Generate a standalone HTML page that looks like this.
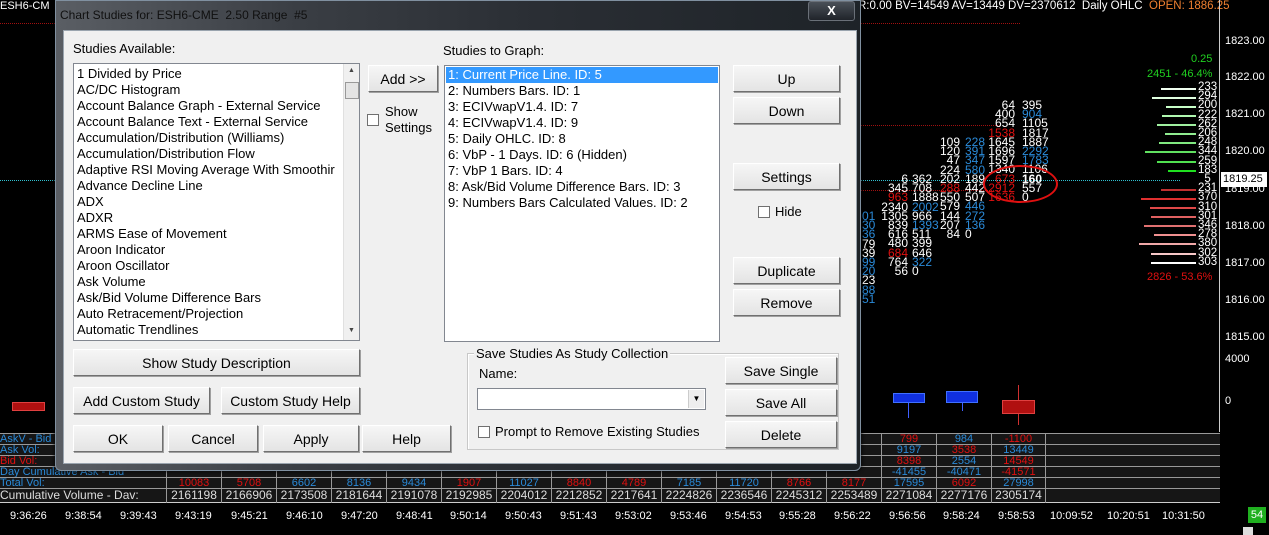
<!DOCTYPE html>
<html><head><meta charset="utf-8"><style>
*{margin:0;padding:0;box-sizing:border-box}
body{width:1269px;height:535px;background:#000;position:relative;overflow:hidden;font-family:"Liberation Sans",sans-serif;}
.a{position:absolute;white-space:nowrap}
.c{font-size:12px;line-height:9.2px;color:#fff}
.w{color:#ddd}.b{color:#2a8ad8}.r{color:#e01010}
.ax{font-size:11px;color:#fff;left:1225px}
.btn{position:absolute;background:linear-gradient(#f6f6f6,#e4e4e4);border:1px solid #fff;border-right-color:#707070;border-bottom-color:#707070;box-shadow:1px 1px 0 #a0a0a0;font-size:14px;color:#000;display:flex;align-items:center;justify-content:center}
.chk{position:absolute;width:12px;height:12px;border:1px solid #707070;background:#fff}
.dl{font-size:13px;color:#000}
.li{font-size:13px;line-height:16px;color:#000;padding-left:3px}
.hl{position:absolute;height:2px}
.row{position:absolute;left:0;width:1220px;height:11px;border-top:1px solid #999;font-size:11px;line-height:10px;background:#161616}
.row .lb{position:absolute;left:0;top:0}
.cells{position:absolute;left:166px;top:0;display:flex}
.cells i{font-style:normal;width:55px;text-align:center;border-left:1px solid #999;height:11px}
.cells i:last-child{border-right:1px solid #999}
</style></head><body>

<div class="a" style="left:0;top:0;font-size:11px;color:#fff">ESH6-CM</div>
<div class="a" style="left:858px;top:0;font-size:11.5px;color:#fff">R:0.00 BV=14549 AV=13449 DV=2370612 &nbsp;Daily OHLC <span style="color:#f08030">&nbsp;OPEN: 1886.25</span></div>

<div class="a" style="left:0;top:23px;width:55px;border-top:1px dotted #a01010"></div>
<div class="a" style="left:860px;top:23px;width:160px;border-top:1px dotted #a01010"></div>
<div class="a" style="left:860px;top:125px;width:140px;border-top:1px dotted #a01010"></div>
<div class="a" style="left:860px;top:190px;width:140px;border-top:1px dotted #a01010"></div>
<div class="a" style="left:860px;top:180px;width:320px;border-top:1px dotted #30c0d0"></div>
<div class="a" style="left:0;top:180px;width:55px;border-top:1px dotted #30c0d0"></div>

<div class="a" style="left:1219px;top:0;width:1px;height:432px;background:#ccc"></div>
<div class="a ax" style="top:35px">1823.00</div>
<div class="a ax" style="top:71px">1822.00</div>
<div class="a ax" style="top:108px">1821.00</div>
<div class="a ax" style="top:145px">1820.00</div>
<div class="a ax" style="top:183px">1819.00</div>
<div class="a" style="left:1221px;top:172px;width:46px;height:15px;background:#fff;color:#000;font-size:11px;padding-left:2px;line-height:15px">1819.25</div>
<div class="a ax" style="top:220px">1818.00</div>
<div class="a ax" style="top:257px">1817.00</div>
<div class="a ax" style="top:294px">1816.00</div>
<div class="a ax" style="top:331px">1815.00</div>
<div class="a ax" style="top:353px">4000</div>
<div class="a ax" style="top:395px">0</div>

<div class="a c" style="right:254px;top:101px;text-align:right">64<br>400<br>654<br><span class="r">1538</span><br>1645<br>1696<br>1597<br>1340<br><span class="r">673</span><br><span class="r">2912</span><br><span class="r">1636</span></div>
<div class="a c" style="left:1022px;top:101px">395<br><span class="b">904</span><br>1105<br>1817<br>1887<br><span class="b">2292</span><br><span class="b">1783</span><br>1106<br><b>160</b><br>557<br>0</div>
<div class="a c" style="right:309px;top:138px;text-align:right">109<br>120<br>47<br>224<br>202<br><span class="r">288</span><br>550<br>579<br>144<br>207<br>84</div>
<div class="a c" style="left:965px;top:138px"><span class="b">228</span><br><span class="b">391</span><br><span class="b">347</span><br><span class="b">580</span><br>189<br>442<br>507<br><span class="b">446</span><br><span class="b">272</span><br><span class="b">136</span><br>0</div>
<div class="a c" style="right:361px;top:175px;text-align:right">6<br>345<br><span class="r">963</span><br>2340<br>1305<br>839<br>616<br>480<br><span class="r">684</span><br>764<br>56</div>
<div class="a c" style="left:912px;top:175px">362<br>708<br>1888<br><span class="b">2002</span><br>966<br><span class="b">1393</span><br>511<br>399<br>646<br><span class="b">322</span><br>0</div>
<div class="a c" style="left:862px;top:212px"><span class="b">01</span><br><span class="b">30</span><br><span class="b">36</span><br>79<br>39<br><span class="b">99</span><br><span class="b">20</span><br>23<br><span class="b">88</span><br><span class="b">51</span></div>
<div class="a" style="left:983px;top:165px;width:75px;height:38px;border:2px solid #e01010;border-radius:50%"></div>

<div class="a" style="left:1191px;top:53px;font-size:11px;color:#20d020">0.25</div>
<div class="a" style="left:1147px;top:68px;font-size:11px;color:#20d020">2451 - 46.4%</div>
<div class="hl" style="left:1161px;width:35px;top:88px;background:#f0fff0"></div>
<div class="hl" style="left:1152px;width:44px;top:97px;background:#e0ffe0"></div>
<div class="hl" style="left:1166px;width:30px;top:106px;background:#c8ffc8"></div>
<div class="hl" style="left:1162px;width:34px;top:115px;background:#b0f8b0"></div>
<div class="hl" style="left:1157px;width:39px;top:124px;background:#a0f0a0"></div>
<div class="hl" style="left:1165px;width:31px;top:133px;background:#90ec90"></div>
<div class="hl" style="left:1159px;width:37px;top:142px;background:#80e880"></div>
<div class="hl" style="left:1145px;width:51px;top:151px;background:#60e060"></div>
<div class="hl" style="left:1157px;width:39px;top:161px;background:#50e050"></div>
<div class="hl" style="left:1168px;width:28px;top:170px;background:#20e020"></div>
<div class="hl" style="left:1161px;width:35px;top:189px;background:#c03030"></div>
<div class="hl" style="left:1141px;width:55px;top:198px;background:#e03030"></div>
<div class="hl" style="left:1150px;width:46px;top:207px;background:#e04848"></div>
<div class="hl" style="left:1151px;width:45px;top:216px;background:#e06060"></div>
<div class="hl" style="left:1144px;width:52px;top:225px;background:#e07070"></div>
<div class="hl" style="left:1154px;width:42px;top:234px;background:#f09090"></div>
<div class="hl" style="left:1139px;width:57px;top:243px;background:#f0a8a8"></div>
<div class="hl" style="left:1151px;width:45px;top:253px;background:#f8c8c8"></div>
<div class="hl" style="left:1151px;width:45px;top:262px;background:#fff"></div>
<div class="a c" style="left:1198px;top:83px;font-size:11.5px">233<br>294<br>200<br>222<br>262<br>206<br>248<br>344<br>259<br>183<br>&nbsp;&nbsp;5<br>231<br>370<br>310<br>301<br>346<br>278<br>380<br>302<br>303</div>
<div class="a" style="left:1147px;top:271px;font-size:11px;color:#e01010">2826 - 53.6%</div>

<div class="a" style="left:12px;top:402px;width:33px;height:9px;background:#b01010;border:1px solid #e04040"></div>
<div class="a" style="left:908px;top:403px;width:1px;height:15px;background:#4060ff"></div>
<div class="a" style="left:893px;top:393px;width:32px;height:10px;background:#1030e0;border:1px solid #4070ff"></div>
<div class="a" style="left:962px;top:403px;width:1px;height:8px;background:#4060ff"></div>
<div class="a" style="left:946px;top:391px;width:32px;height:12px;background:#1030e0;border:1px solid #4070ff"></div>
<div class="a" style="left:1018px;top:385px;width:1px;height:40px;background:#d03030"></div>
<div class="a" style="left:1002px;top:400px;width:33px;height:14px;background:#b01010;border:1px solid #e04040"></div>

<!-- bottom table -->
<div class="row" style="top:433px"><span class="lb b">AskV - Bid</span><div class="cells"><i></i><i></i><i></i><i></i><i></i><i></i><i></i><i></i><i></i><i></i><i></i><i></i><i></i><i class="r">799</i><i class="b">984</i><i class="r">-1100</i></div></div>
<div class="row" style="top:444px"><span class="lb b">Ask Vol:</span><div class="cells"><i></i><i></i><i></i><i></i><i></i><i></i><i></i><i></i><i></i><i></i><i></i><i></i><i></i><i class="b">9197</i><i class="r">3538</i><i class="b">13449</i></div></div>
<div class="row" style="top:455px"><span class="lb r">Bid Vol:</span><div class="cells"><i></i><i></i><i></i><i></i><i></i><i></i><i></i><i></i><i></i><i></i><i></i><i></i><i></i><i class="r">8398</i><i class="b">2554</i><i class="r">14549</i></div></div>
<div class="row" style="top:466px"><span class="lb b">Day Cumulative Ask - Bid</span><div class="cells"><i></i><i></i><i></i><i></i><i></i><i></i><i></i><i></i><i></i><i></i><i></i><i></i><i></i><i class="b">-41455</i><i class="b">-40471</i><i class="r">-41571</i></div></div>
<div class="row" style="top:477px"><span class="lb b">Total Vol:</span><div class="cells"><i class="r">10083</i><i class="r">5708</i><i class="b">6602</i><i class="b">8136</i><i class="b">9434</i><i class="r">1907</i><i class="b">11027</i><i class="r">8840</i><i class="r">4789</i><i class="b">7185</i><i class="b">11720</i><i class="r">8766</i><i class="r">8177</i><i class="b">17595</i><i class="r">6092</i><i class="b">27998</i></div></div>
<div class="row w" style="top:488px;height:15px;border-bottom:1px solid #ccc;line-height:13px;font-size:12px"><span class="lb">Cumulative Volume - Dav:</span><div class="cells"><i style="height:14px">2161198</i><i style="height:14px">2166906</i><i style="height:14px">2173508</i><i style="height:14px">2181644</i><i style="height:14px">2191078</i><i style="height:14px">2192985</i><i style="height:14px">2204012</i><i style="height:14px">2212852</i><i style="height:14px">2217641</i><i style="height:14px">2224826</i><i style="height:14px">2236546</i><i style="height:14px">2245312</i><i style="height:14px">2253489</i><i style="height:14px">2271084</i><i style="height:14px">2277176</i><i style="height:14px">2305174</i></div></div>
<div class="a" style="left:0;top:510px;font-size:11px;color:#fff">
<span class="a" style="left:10px">9:36:26</span><span class="a" style="left:65px">9:38:54</span><span class="a" style="left:120px">9:39:43</span><span class="a" style="left:175px">9:43:19</span><span class="a" style="left:231px">9:45:21</span><span class="a" style="left:286px">9:46:10</span><span class="a" style="left:341px">9:47:20</span><span class="a" style="left:396px">9:48:41</span><span class="a" style="left:450px">9:50:14</span><span class="a" style="left:505px">9:50:43</span><span class="a" style="left:560px">9:51:43</span><span class="a" style="left:615px">9:53:02</span><span class="a" style="left:670px">9:53:46</span><span class="a" style="left:725px">9:54:53</span><span class="a" style="left:779px">9:55:28</span><span class="a" style="left:834px">9:56:22</span><span class="a" style="left:889px">9:56:56</span><span class="a" style="left:943px">9:58:24</span><span class="a" style="left:998px">9:58:53</span><span class="a" style="left:1050px">10:09:52</span><span class="a" style="left:1107px">10:20:51</span><span class="a" style="left:1162px">10:31:50</span></div>
<div class="a" style="left:1248px;top:507px;width:18px;height:16px;background:#20b020;color:#fff;font-size:11px;text-align:center;line-height:16px">54</div>
<div class="a" style="left:1243px;top:527px;width:10px;height:8px;background:#ddd"></div>

<!-- dialog -->
<div class="a" style="left:55px;top:0;width:806px;height:471px;background:linear-gradient(90deg,#5a5e64 0%,#3a3e44 30%,#2a2e34 60%,#1e2328 100%);border:1px solid #8090a0;border-radius:0 0 6px 6px;box-shadow:0 0 4px #000"></div>
<div class="a" style="left:60px;top:8px;font-size:12px;color:#101010">Chart Studies for: ESH6-CME &nbsp;2.50 Range &nbsp;#5</div>
<div class="a" style="left:808px;top:1px;width:47px;height:20px;border:1px solid #6a7078;border-radius:3px;background:linear-gradient(#4a5058,#20242a);color:#fff;font-size:13px;font-weight:bold;text-align:center;line-height:18px">X</div>
<div class="a" style="left:63px;top:30px;width:794px;height:434px;background:#f0f0f0;border:1px solid #9aa4ae"></div>

<div class="a dl" style="left:73px;top:41px">Studies Available:</div>
<div class="a" style="left:73px;top:63px;width:287px;height:278px;background:#fff;border:1px solid #828790;overflow:hidden">
<div class="li" style="padding-top:2px">1 Divided by Price<br>AC/DC Histogram<br>Account Balance Graph - External Service<br>Account Balance Text - External Service<br>Accumulation/Distribution (Williams)<br>Accumulation/Distribution Flow<br>Adaptive RSI Moving Average With Smoothir<br>Advance Decline Line<br>ADX<br>ADXR<br>ARMS Ease of Movement<br>Aroon Indicator<br>Aroon Oscillator<br>Ask Volume<br>Ask/Bid Volume Difference Bars<br>Auto Retracement/Projection<br>Automatic Trendlines<br>Average Daily Range</div>
<div class="a" style="left:269px;top:0;width:17px;height:276px;background:#f0f0f0;border-left:1px solid #e0e0e0"></div>
<div class="a" style="left:271px;top:18px;width:14px;height:17px;background:#e4e4e4;border:1px solid #999"></div>
<div class="a" style="left:274px;top:3px;font-size:7px;color:#444">▲</div>
<div class="a" style="left:274px;top:263px;font-size:7px;color:#444">▼</div>
</div>
<div class="btn" style="left:368px;top:65px;width:70px;height:27px">Add &gt;&gt;</div>
<div class="chk" style="left:367px;top:114px"></div>
<div class="a dl" style="left:385px;top:104px;line-height:16px">Show<br>Settings</div>

<div class="a dl" style="left:443px;top:43px">Studies to Graph:</div>
<div class="a" style="left:444px;top:65px;width:276px;height:277px;background:#fff;border:1px solid #828790">
<div class="li" style="padding-top:1px;padding-left:0">
<div style="background:#3399ff;color:#fff;padding-left:2px;margin:0 1px">1: Current Price Line. ID: 5</div>
<div style="padding-left:3px">2: Numbers Bars. ID: 1<br>3: ECIVwapV1.4. ID: 7<br>4: ECIVwapV1.4. ID: 9<br>5: Daily OHLC. ID: 8<br>6: VbP - 1 Days. ID: 6 (Hidden)<br>7: VbP 1 Bars. ID: 4<br>8: Ask/Bid Volume Difference Bars. ID: 3<br>9: Numbers Bars Calculated Values. ID: 2</div></div></div>

<div class="btn" style="left:733px;top:65px;width:107px;height:27px">Up</div>
<div class="btn" style="left:733px;top:97px;width:107px;height:27px">Down</div>
<div class="btn" style="left:733px;top:163px;width:107px;height:27px">Settings</div>
<div class="chk" style="left:758px;top:206px"></div>
<div class="a dl" style="left:775px;top:204px">Hide</div>
<div class="btn" style="left:733px;top:257px;width:107px;height:27px">Duplicate</div>
<div class="btn" style="left:733px;top:289px;width:107px;height:27px">Remove</div>

<div class="btn" style="left:73px;top:349px;width:287px;height:27px">Show Study Description</div>
<div class="btn" style="left:73px;top:387px;width:137px;height:27px">Add Custom Study</div>
<div class="btn" style="left:221px;top:387px;width:139px;height:27px">Custom Study Help</div>
<div class="btn" style="left:73px;top:425px;width:90px;height:27px">OK</div>
<div class="btn" style="left:168px;top:425px;width:90px;height:27px">Cancel</div>
<div class="btn" style="left:263px;top:425px;width:96px;height:27px">Apply</div>
<div class="btn" style="left:362px;top:425px;width:89px;height:27px">Help</div>

<div class="a" style="left:467px;top:353px;width:372px;height:97px;border:1px solid #c8c8c8;box-shadow:inset 1px 1px 0 #fff"></div>
<div class="a dl" style="left:474px;top:346px;background:#f0f0f0;padding:0 2px">Save Studies As Study Collection</div>
<div class="a dl" style="left:479px;top:366px">Name:</div>
<div class="a" style="left:477px;top:388px;width:229px;height:22px;background:#fff;border:1px solid #828790"></div>
<div class="a" style="left:688px;top:390px;width:16px;height:18px;background:#eee;border-left:1px solid #ccc;font-size:8px;text-align:center;line-height:18px">▼</div>
<div class="chk" style="left:478px;top:426px"></div>
<div class="a dl" style="left:495px;top:424px">Prompt to Remove Existing Studies</div>
<div class="btn" style="left:725px;top:357px;width:112px;height:27px">Save Single</div>
<div class="btn" style="left:725px;top:389px;width:112px;height:27px">Save All</div>
<div class="btn" style="left:725px;top:421px;width:112px;height:27px">Delete</div>
</body></html>
